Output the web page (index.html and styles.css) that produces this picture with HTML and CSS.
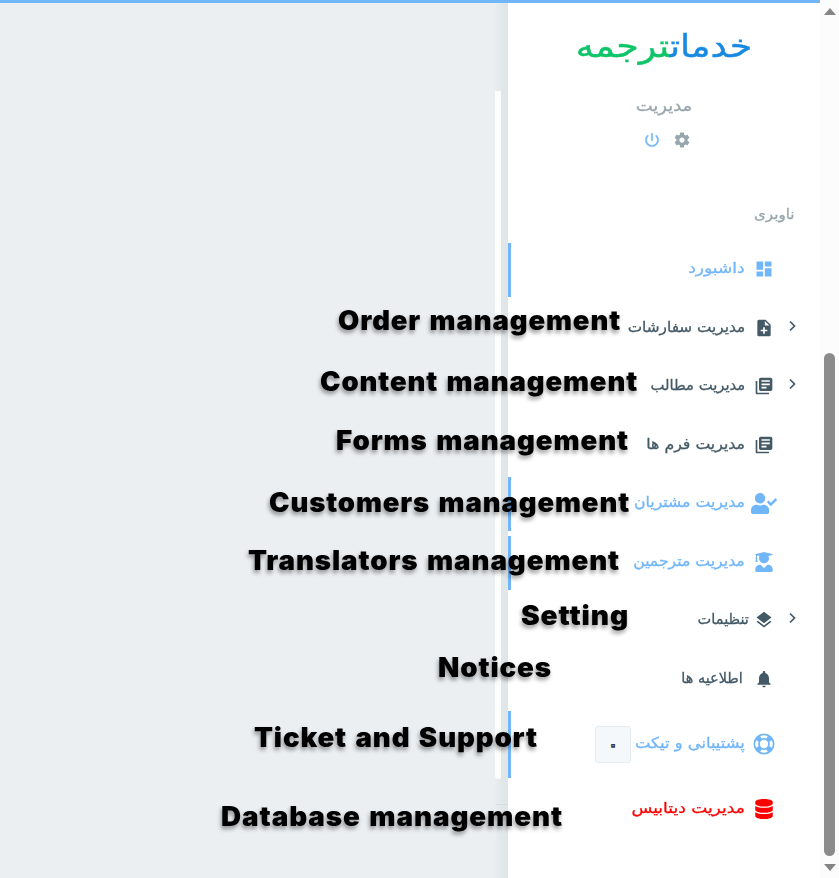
FILE: index.html
```
<!DOCTYPE html>
<html lang="fa" dir="rtl">
<head>
<meta charset="utf-8">
<title>مدیریت</title>
<link rel="stylesheet" href="styles.css">
</head>
<body>
<div class="page">
  <div class="scrollbar"><i class="arrow up"></i><i class="thumb"></i><i class="arrow down"></i></div>
  <aside class="sidebar">
    <div class="logo"><span class="blue">خدمات</span><span class="green">ترجمه</span></div>
    <div class="role"><span>مدیریت</span></div>
    <div class="tools">
      <svg class="gear" viewBox="0 0 24 24"><path d="M19.43 12.98c.04-.32.07-.64.07-.98s-.03-.66-.07-.98l2.11-1.65c.19-.15.24-.42.12-.64l-2-3.46c-.12-.22-.39-.3-.61-.22l-2.49 1c-.52-.4-1.08-.73-1.69-.98l-.38-2.65C14.46 2.18 14.25 2 14 2h-4c-.25 0-.46.18-.49.42l-.38 2.65c-.61.25-1.17.59-1.69.98l-2.49-1c-.23-.09-.49 0-.61.22l-2 3.46c-.13.22-.07.49.12.64l2.11 1.65c-.04.32-.07.65-.07.98s.03.66.07.98l-2.11 1.65c-.19.15-.24.42-.12.64l2 3.46c.12.22.39.3.61.22l2.49-1c.52.4 1.08.73 1.69.98l.38 2.65c.03.24.24.42.49.42h4c.25 0 .46-.18.49-.42l.38-2.65c.61-.25 1.17-.59 1.69-.98l2.49 1c.23.09.49 0 .61-.22l2-3.46c.12-.22.07-.49-.12-.64l-2.11-1.65zM12 15.5c-1.93 0-3.5-1.57-3.5-3.5s1.57-3.5 3.5-3.5 3.5 1.57 3.5 3.5-1.57 3.5-3.5 3.5z"/></svg>
      <svg class="power" viewBox="0 0 24 24"><path d="M13 3h-2v10h2V3zm4.83 2.17-1.42 1.42C17.99 7.86 19 9.81 19 12c0 3.87-3.13 7-7 7s-7-3.13-7-7c0-2.19 1.01-4.14 2.58-5.42L6.17 5.17C4.23 6.82 3 9.26 3 12c0 4.97 4.03 9 9 9s9-4.03 9-9c0-2.74-1.23-5.18-3.17-6.83z"/></svg>
    </div>
    <div class="nav-title"><span>ناوبری</span></div>
    <nav class="menu">
      <a class="item active"><i></i><svg class="md" viewBox="0 0 24 24"><path d="M3 13h8V3H3v10zm0 8h8v-6H3v6zm10 0h8V11h-8v10zm0-18v6h8V3h-8z"/></svg><span class="t w1">داشبورد</span></a>
      <a class="item"><svg class="chev" viewBox="0 0 8 12"><path d="M1 1.5 5.5 6 1 10.5"/></svg><svg class="md" viewBox="0 0 24 24"><path d="M14 2H6c-1.1 0-1.99.9-1.99 2L4 20c0 1.100.89 2 1.990 2H18c1.100 0 2-.9 2-2V8l-6-6zm2 14h-3v3h-2v-3H8v-2h3v-3h2v3h3v2zm-3-7V3.500L18.500 9H13z"/></svg><span class="t w2">مدیریت سفارشات</span></a>
      <a class="item"><svg class="chev" viewBox="0 0 8 12"><path d="M1 1.5 5.5 6 1 10.5"/></svg><svg class="md" viewBox="0 0 24 24"><path d="M4 6H2v14c0 1.100.9 2 2 2h14v-2H4V6zm16-4H8c-1.100 0-2 .9-2 2v12c0 1.100.9 2 2 2h12c1.100 0 2-.9 2-2V4c0-1.100-.9-2-2-2zm-1 9H9V9h10v2zm-4 4H9v-2h6v2zm4-8H9V5h10v2z"/></svg><span class="t w3">مدیریت مطالب</span></a>
      <a class="item"><i></i><svg class="md" viewBox="0 0 24 24"><path d="M4 6H2v14c0 1.100.9 2 2 2h14v-2H4V6zm16-4H8c-1.100 0-2 .9-2 2v12c0 1.100.9 2 2 2h12c1.100 0 2-.9 2-2V4c0-1.100-.9-2-2-2zm-1 9H9V9h10v2zm-4 4H9v-2h6v2zm4-8H9V5h10v2z"/></svg><span class="t w4">مدیریت فرم ها</span></a>
      <a class="item active"><i></i><svg class="wide" viewBox="0 0 640 512"><path d="M224 256c70.700 0 128-57.300 128-128S294.700 0 224 0 96 57.300 96 128s57.300 128 128 128zm89.600 32h-16.700c-22.200 10.200-46.900 16-72.900 16s-50.600-5.800-72.900-16h-16.700C60.200 288 0 348.200 0 422.400V464c0 26.500 21.500 48 48 48h352c26.500 0 48-21.500 48-48v-41.600c0-74.200-60.200-134.400-134.400-134.400zM636.600 159.600l-27.800-28.200c-4.600-4.700-12.100-4.700-16.800-.1l-104.800 104-45.500-45.800c-4.600-4.700-12.100-4.700-16.800-.1l-28.100 27.900c-4.700 4.600-4.700 12.100-.1 16.800l81.700 82.300c4.600 4.700 12.100 4.700 16.800.1l141.300-140.200c4.600-4.700 4.700-12.200.1-16.700z"/></svg><span class="t w5">مدیریت مشتریان</span></a>
      <a class="item active"><i></i><svg class="fa" viewBox="0 0 448 512"><path d="M319.400 320.600 224 416l-95.400-95.400C57.100 323.700 0 382.200 0 454.400v9.600c0 26.500 21.500 48 48 48h352c26.500 0 48-21.500 48-48v-9.600c0-72.200-57.100-130.700-128.600-133.800zM13.600 79.800l6.400 1.500v58.400c-7 4.200-12 11.500-12 20.300 0 8.400 4.600 15.400 11.100 19.700L3.500 242c-1.700 6.900 2.100 14 7.600 14h41.800c5.500 0 9.300-7.100 7.600-14l-15.600-62.300C51.400 175.400 56 168.400 56 160c0-8.800-5-16.100-12-20.300V87.100l66 15.900c-8.600 17.200-14 36.400-14 57 0 70.700 57.300 128 128 128s128-57.300 128-128c0-20.600-5.300-39.800-14-57l96.300-23.200c18.200-4.400 18.200-27.100 0-31.500L243.100 3.300c-12.300-3-25.800-3-38 0L13.600 48.200c-18.100 4.400-18.100 27.200 0 31.600z"/></svg><span class="t w6">مدیریت مترجمین</span></a>
      <a class="item"><svg class="chev" viewBox="0 0 8 12"><path d="M1 1.5 5.5 6 1 10.5"/></svg><svg class="md" viewBox="0 0 24 24"><path d="m11.990 18.540-7.370-5.730L3 14.070l9 7 9-7-1.630-1.270-7.380 5.740zM12 16l7.360-5.730L21 9l-9-7-9 7 1.630 1.270L12 16z"/></svg><span class="t w7">تنظیمات</span></a>
      <a class="item"><i></i><svg class="md" viewBox="0 0 24 24"><path d="M12 22c1.100 0 2-.9 2-2h-4c0 1.100.9 2 2 2zm6-6v-5c0-3.070-1.640-5.640-4.500-6.320V4c0-.83-.67-1.500-1.500-1.500s-1.500.67-1.500 1.500v.68C7.630 5.360 6 7.920 6 11v5l-2 2v1h16v-1l-2-2z"/></svg><span class="t w8">اطلاعیه ها</span></a>
      <a class="item active tall"><i></i><svg class="ring" viewBox="0 0 22 22"><path fill-rule="evenodd" d="M11 .5a10.500 10.500 0 1 0 0 21 10.500 10.500 0 0 0 0-21zm0 6.300a4.200 4.200 0 1 1 0 8.400 4.200 4.200 0 0 1 0-8.400zM7.200 3.200a8.600 8.600 0 0 1 7.600 0l-1.500 2.400a6 6 0 0 0-4.600 0zM18.800 7.200a8.600 8.600 0 0 1 0 7.600l-2.400-1.500a6 6 0 0 0 0-4.600zM14.800 18.800a8.600 8.600 0 0 1-7.600 0l1.500-2.400a6 6 0 0 0 4.600 0zM3.200 14.800a8.600 8.600 0 0 1 0-7.600l2.400 1.500a6 6 0 0 0 0 4.600z"/></svg><span class="t w9">پشتیبانی و تیکت</span><b class="badge">۰</b></a>
      <a class="item danger"><i></i><svg class="fa" viewBox="0 0 448 512"><path d="M448 73.100v45.700C448 159.100 347.700 192 224 192S0 159.100 0 118.900V73.100C0 32.900 100.300 0 224 0s224 32.900 224 73.100zM448 176v102.900c0 40.200-100.300 73.100-224 73.100S0 319.100 0 278.900V176c48.100 33.100 136.200 48.600 224 48.600s175.900-15.500 224-48.600zm0 160v102.900c0 40.200-100.300 73.100-224 73.100S0 479.100 0 438.900V336c48.100 33.100 136.200 48.600 224 48.600s175.900-15.500 224-48.600z"/></svg><span class="t w10">مدیریت دیتابیس</span></a>
    </nav>
  </aside>
  <main class="content"><div class="panel"></div><div class="rule"></div></main>
</div>
<div class="notes" dir="ltr">
  <svg viewBox="0 0 839 878">
    <text x="338" y="330" textLength="283" lengthAdjust="spacingAndGlyphs">Order management</text>
    <text x="320" y="391" textLength="318" lengthAdjust="spacingAndGlyphs">Content management</text>
    <text x="336" y="450" textLength="293" lengthAdjust="spacingAndGlyphs">Forms management</text>
    <text x="269" y="512" textLength="361" lengthAdjust="spacingAndGlyphs">Customers management</text>
    <text x="248" y="570" textLength="372" lengthAdjust="spacingAndGlyphs">Translators management</text>
    <text x="521" y="625" textLength="108" lengthAdjust="spacingAndGlyphs">Setting</text>
    <text x="438" y="677" textLength="114" lengthAdjust="spacingAndGlyphs">Notices</text>
    <text x="254" y="747" textLength="284" lengthAdjust="spacingAndGlyphs">Ticket and Support</text>
    <text x="221" y="826" textLength="342" lengthAdjust="spacingAndGlyphs">Database management</text>
  </svg>
</div>
</body>
</html>
```
FILE: styles.css
```
* { box-sizing: border-box; }
body { margin: 0; font-family: "DejaVu Sans", sans-serif; overflow: hidden; background: #fff; }
.page { display: flex; width: 839px; height: 878px; }
.scrollbar { width: 19px; background: #fcfcfc; display: flex; flex-direction: column; align-items: center; padding: 8px 0 6px; }
.arrow { border: 6.5px solid transparent; height: 0; }
.up { border-top: 0; border-bottom: 7px solid #858585; }
.down { border-bottom: 0; border-top: 7px solid #858585; margin-top: 8px; }
.thumb { width: 11px; height: 503px; margin-top: 338px; border-radius: 6px; background: #8b8b8b; }
.sidebar { width: 312px; border-top: 3px solid #71b6f9; background: #fff; }
.logo { height: 88px; padding-top: 17px; text-align: center; font-size: 32px; line-height: 52px; white-space: nowrap; transform: scaleX(1.137); -webkit-text-stroke: .4px; }
.blue { color: #188ae2; }
.green { color: #10c469; }
.role { height: 34px; line-height: 30px; text-align: center; color: #98a6ad; font-size: 16px; transform: scaleX(1.12); -webkit-text-stroke: .3px; }
.tools { display: flex; gap: 12px; justify-content: center; height: 72px; padding: 6px 0 0 6px; }
.tools svg { width: 18px; height: 18px; }
.gear { fill: #98a6ad; }
.power { fill: #71b6f9; stroke: #71b6f9; stroke-width: .4; }
.nav-title { height: 46px; padding-right: 25px; line-height: 34px; font-size: 14px; color: #98a6ad; -webkit-text-stroke: .3px; }
.nav-title span { display: inline-block; transform: scaleX(1.08); transform-origin: right; }
.menu { display: flex; flex-direction: column; gap: 4.5px; }
.item { display: flex; align-items: center; height: 54px; padding-right: 13px; border-left: 3px solid transparent; color: #435966; fill: #435966; font-size: 15px; white-space: nowrap; }
.item > i { width: 30px; }
.item.active { color: #71b6f9; fill: #71b6f9; border-left-color: #71b6f9; }
.item.danger { color: #f00; fill: #f00; }
.item.tall { height: 67px; }
.chev { width: 8px; height: 12px; margin: 0 10px 6px 12px; fill: none; stroke: #435966; stroke-width: 1.7; }
.md { width: 20px; height: 20px; margin: 0 3px 2px; }
.wide { width: 26px; height: 21px; margin-bottom: 1px; }
.fa { width: 18px; height: 20px; margin: 0 4px 1px; }
.ring { width: 22px; height: 22px; margin: 0 2px 2px; }
.t { margin: 0 6px 4px 0; transform-origin: right; -webkit-text-stroke: .3px; }
.w1 { transform: scaleX(1.136); }
.w2 { transform: scaleX(1.02); }
.w3 { transform: scaleX(.985); }
.w4 { transform: scaleX(1.05); }
.w5 { transform: scaleX(1.047); }
.w6 { transform: scaleX(1.045); }
.w7 { margin-right: 2px; transform: scaleX(.97); }
.w8 { margin-right: 8px; transform: scaleX(.965); }
.w9 { transform: scaleX(1.09); }
.w10 { transform: scaleX(1.135); }
.badge { display: flex; align-items: center; justify-content: center; width: 36px; height: 37px; margin-right: 13px; background: #f4f8fb; border: 1px solid #e6ecef; border-radius: 3px; color: #f4f8fb; font-size: 14px; -webkit-text-stroke: 1.4px #343a40; }
.content { flex: 1; border-top: 3px solid #71b6f9; background: linear-gradient(to left, #e0e5e8 0, #e2e7ea 6px, #ebeff2 14px); padding-top: 88px; }
.panel { width: 6px; height: 688px; margin-right: 7px; background: #fcfdfd; border-radius: 0 0 4px 4px; }
.rule { width: 12px; height: 1px; margin-top: 25px; background: #d6dce0; }
.notes { position: absolute; inset: 0; }
.notes svg { display: block; width: 839px; height: 878px; }
.notes text { font: 900 26.5px Inter, sans-serif; letter-spacing: .8px; word-spacing: 2px; fill: #000; filter: drop-shadow(-1px 3px 2px rgba(0,0,0,.4)); }
```
